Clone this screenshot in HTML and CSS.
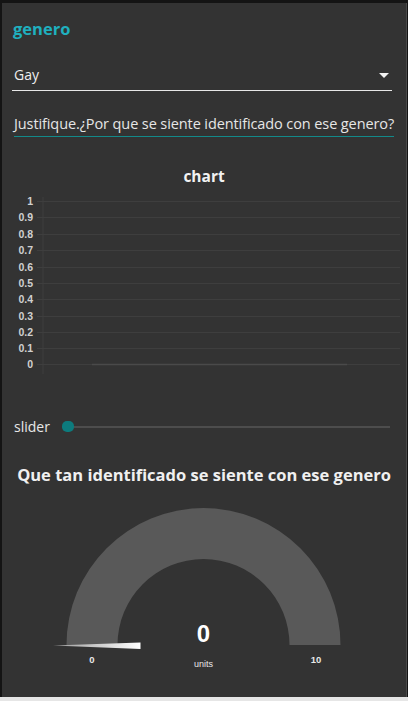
FILE: index.html
```html
<!DOCTYPE html>
<html>
<head>
<meta charset="utf-8">
<link rel="stylesheet" href="styles.css">
</head>
<body>
<div class="frame">
  <div class="card">
    <div class="group-title">genero</div>
    <div class="select">
      <span class="select-value">Gay</span>
      <span class="caret"></span>
    </div>
    <div class="text-input">Justifique.¿Por que se siente identificado con ese genero?</div>
    <div class="chart">
      <div class="chart-title">chart</div>
      <svg class="chart-svg" width="402" height="185" viewBox="0 0 402 185">
        <g class="grid">
          <line x1="41" y1="6" x2="41" y2="183"/>
          <line x1="35" y1="10.5" x2="398" y2="10.5"/>
          <line x1="35" y1="26.5" x2="398" y2="26.5"/>
          <line x1="35" y1="43.5" x2="398" y2="43.5"/>
          <line x1="35" y1="59.5" x2="398" y2="59.5"/>
          <line x1="35" y1="76.5" x2="398" y2="76.5"/>
          <line x1="35" y1="92.5" x2="398" y2="92.5"/>
          <line x1="35" y1="108.5" x2="398" y2="108.5"/>
          <line x1="35" y1="125.5" x2="398" y2="125.5"/>
          <line x1="35" y1="141.5" x2="398" y2="141.5"/>
          <line x1="35" y1="157.5" x2="398" y2="157.5"/>
          <line x1="35" y1="173.5" x2="398" y2="173.5"/>
        </g>
        <line class="data" x1="90" y1="173.5" x2="345" y2="173.5"/>
        <g class="ylabels">
          <text x="31" y="14">1</text>
          <text x="31" y="30">0.9</text>
          <text x="31" y="47">0.8</text>
          <text x="31" y="63">0.7</text>
          <text x="31" y="80">0.6</text>
          <text x="31" y="96">0.5</text>
          <text x="31" y="112">0.4</text>
          <text x="31" y="129">0.3</text>
          <text x="31" y="145">0.2</text>
          <text x="31" y="161">0.1</text>
          <text x="31" y="177">0</text>
        </g>
      </svg>
    </div>
    <div class="slider-row">
      <span class="slider-label">slider</span>
      <div class="slider-track"><span class="slider-thumb"></span></div>
    </div>
    <div class="gauge-title">Que tan identificado se siente con ese genero</div>
    <div class="gauge">
      <svg width="402" height="190" viewBox="0 0 402 190">
        <defs>
          <linearGradient id="needleGrad" x1="0" y1="0" x2="1" y2="0">
            <stop offset="0" stop-color="#9a9a9a"/>
            <stop offset="1" stop-color="#ffffff"/>
          </linearGradient>
        </defs>
        <path class="arc" d="M64.5 144 A137 137 0 0 1 338.5 144 L287.5 144 A86 86 0 0 0 115.5 144 Z"/>
        <path d="M51 144.5 L138.5 141.5 L138.5 148 Z" fill="url(#needleGrad)"/>
        <text class="g-value" x="201.5" y="141">0</text>
        <text class="g-units" x="201.5" y="166">units</text>
        <text class="g-min" x="90" y="162">0</text>
        <text class="g-max" x="314" y="162">10</text>
      </svg>
    </div>
  </div>
</div>
</body>
</html>
```
FILE: styles.css
```css
html, body {
  margin: 0;
  padding: 0;
}
body {
  width: 408px;
  height: 701px;
  background: #e6e6e6;
  overflow: hidden;
  font-family: "Open Sans", "Noto Sans", sans-serif;
}
.frame {
  height: 697px;
  background: #141414;
  padding: 3px 4px 0 2px;
  box-sizing: border-box;
  display: flex;
}
.card {
  flex: 1;
  background: #333333;
  border-right: 1px solid #4a4a4a;
  display: flex;
  flex-direction: column;
}
.group-title {
  color: #1fb0bf;
  font-weight: 700;
  font-size: 16.5px;
  line-height: 20px;
  padding: 16px 0 0 11px;
  height: 20px;
}
.select {
  margin: 21px 14px 0 10px;
  height: 30px;
  border-bottom: 1px solid #e8e8e8;
  display: flex;
  align-items: flex-start;
  justify-content: space-between;
  color: #eeeeee;
  font-size: 14px;
}
.select-value {
  padding-left: 2px;
  line-height: 20px;
  padding-top: 5px;
}
.caret {
  width: 0;
  height: 0;
  border-left: 5px solid transparent;
  border-right: 5px solid transparent;
  border-top: 5px solid #f2f2f2;
  margin: 13px 3px 0 0;
}
.text-input {
  margin: 20px 12px 0 12px;
  height: 26px;
  border-bottom: 1px solid #138a8a;
  color: #e6e6e6;
  font-size: 14.5px;
  line-height: 20px;
  padding-top: 3px;
  box-sizing: border-box;
  white-space: nowrap;
  letter-spacing: -0.1px;
}
.chart {
  margin-top: 29px;
  display: flex;
  flex-direction: column;
}
.chart-title {
  text-align: center;
  color: #f2f2f2;
  font-weight: 700;
  font-size: 15.5px;
  line-height: 20px;
}
.chart-svg {
  display: block;
  margin-top: 5px;
}
.grid line {
  stroke: #3e3e3e;
  stroke-width: 1;
}
.data {
  stroke: #4a4a4a;
  stroke-width: 1.5;
}
.ylabels text {
  fill: #d0d0d0;
  font-family: "Liberation Sans", Arial, sans-serif;
  font-weight: 700;
  font-size: 10.5px;
  text-anchor: end;
}
.slider-row {
  margin-top: 41px;
  display: flex;
  align-items: center;
  padding: 0 16px 0 12px;
  height: 20px;
}
.slider-label {
  color: #e8e8e8;
  font-size: 14px;
  line-height: 20px;
  width: 48px;
}
.slider-track {
  flex: 1;
  height: 2px;
  background: #4d4d4d;
  position: relative;
}
.slider-thumb {
  position: absolute;
  left: 0;
  top: -5px;
  width: 12px;
  height: 11px;
  border-radius: 5px;
  background: #0d7b7d;
}
.gauge-title {
  margin-top: 28px;
  text-align: center;
  color: #f0f0f0;
  font-weight: 700;
  font-size: 16.5px;
  line-height: 20px;
  white-space: nowrap;
}
.gauge svg {
  display: block;
}
.gauge {
  margin-top: 16px;
}
.arc {
  fill: #595959;
}
.g-value {
  fill: #ffffff;
  font-family: "Liberation Sans", Arial, sans-serif;
  font-weight: 700;
  font-size: 24px;
  text-anchor: middle;
}
.g-units, .g-min, .g-max {
  fill: #e8e8e8;
  font-family: "Liberation Sans", Arial, sans-serif;
  font-weight: 700;
  font-size: 9.5px;
  text-anchor: middle;
}
.g-units {
  font-weight: 400;
  font-size: 9px;
}
```
